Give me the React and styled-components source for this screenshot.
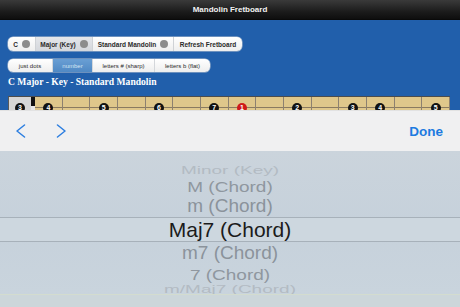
import React from "react";
import styled, { createGlobalStyle } from "styled-components";

const GlobalStyle = createGlobalStyle`
  html, body {
    margin: 0;
    padding: 0;
    background: #215fab;
  }
  body {
    font-family: "Liberation Sans", Arial, sans-serif;
  }
`;

const keyParts = [
  { label: "C", width: 27, knob: true },
  { label: "Major (Key)", width: 57, knob: true, active: true },
  { label: "Standard Mandolin", width: 81, knob: true },
  { label: "Refresh Fretboard", width: 69 },
];

const modes = [
  { label: "just dots", width: 44 },
  { label: "number", width: 40, active: true },
  { label: "letters # (sharp)", width: 62 },
  { label: "letters b (flat)", width: 56 },
];

// fret number -> note on the top string
const notes = { 1: "4", 3: "5", 5: "6", 7: "7", 8: "1", 10: "2", 12: "3", 13: "4", 15: "5" };

const rows = [
  { text: "Minor (Key)", h: 14, scale: 0.55, color: "#b3bbc3" },
  { text: "M (Chord)", h: 18, scale: 0.78, color: "#8f979f" },
  { text: "m (Chord)", h: 22, scale: 0.92, color: "#8b939b" },
];

const rowsBelow = [
  { text: "m7 (Chord)", h: 22, scale: 0.92, color: "#8b939b" },
  { text: "7 (Chord)", h: 20, scale: 0.8, color: "#8f979f" },
  { text: "m/Maj7 (Chord)", h: 11, scale: 0.55, color: "#b3bbc3" },
];

export default function App() {
  const frets = [];
  for (let i = 1; i <= 15; i++) frets.push(i);

  return (
    <Screen>
      <GlobalStyle />
      <TitleBar>Mandolin Fretboard</TitleBar>
      <Content>
        <Segmented $top={17} $height={14}>
          {keyParts.map((p) => (
            <KeySegment key={p.label} $width={p.width} $active={p.active}>
              {p.label}
              {p.knob && <Knob />}
            </KeySegment>
          ))}
        </Segmented>
        <Segmented $top={8} $height={13}>
          {modes.map((m) => (
            <ModeSegment key={m.label} $width={m.width} $active={m.active}>
              {m.label}
            </ModeSegment>
          ))}
        </Segmented>
        <Heading>C Major - Key - Standard Mandolin</Heading>
        <Board>
          <OpenCell>
            <Dot>3</Dot>
          </OpenCell>
          <Nut />
          <Frets>
            {frets.map((f) => (
              <Fret key={f}>
                {notes[f] && <Dot $root={notes[f] === "1"}>{notes[f]}</Dot>}
              </Fret>
            ))}
          </Frets>
        </Board>
      </Content>

      <InputPanel>
        <Toolbar>
          <NavGroup>
            <Chevron viewBox="0 0 11 14">
              <polyline points="9.5,1 2,7 9.5,13" />
            </Chevron>
            <Chevron viewBox="0 0 11 14">
              <polyline points="1.5,1 9,7 1.5,13" />
            </Chevron>
          </NavGroup>
          <DoneButton>Done</DoneButton>
        </Toolbar>
        <Picker>
          {rows.map((r) => (
            <PickerRow key={r.text} $h={r.h}>
              <PickerText $scale={r.scale} $color={r.color}>{r.text}</PickerText>
            </PickerRow>
          ))}
          <SelectedRow>Maj7 (Chord)</SelectedRow>
          {rowsBelow.map((r) => (
            <PickerRow key={r.text} $h={r.h}>
              <PickerText $scale={r.scale} $color={r.color}>{r.text}</PickerText>
            </PickerRow>
          ))}
        </Picker>
        <PickerFoot />
      </InputPanel>
    </Screen>
  );
}

const Screen = styled.div`
  position: relative;
  width: 460px;
  height: 307px;
  overflow: hidden;
  background: #215fab;
`;

const TitleBar = styled.div`
  height: 20px;
  display: flex;
  align-items: center;
  justify-content: center;
  background: linear-gradient(#3a3a3a, #1c1c1c 60%, #0e0e0e);
  border-bottom: 1px solid #0a0a0a;
  color: #f2f2f2;
  font-size: 8px;
  font-weight: bold;
  box-sizing: border-box;
`;

const Content = styled.div`
  padding: 0 0 0 8px;
  display: flex;
  flex-direction: column;
  align-items: flex-start;
`;

const Segmented = styled.div`
  margin-top: ${(p) => p.$top}px;
  height: ${(p) => p.$height}px;
  display: flex;
  border-radius: 5px;
  overflow: hidden;
  background: linear-gradient(#ffffff, #eeeeee);
  box-shadow: 0 0 0 0.5px #b9c4d2;
`;

const KeySegment = styled.div`
  width: ${(p) => p.$width}px;
  display: flex;
  align-items: center;
  justify-content: center;
  gap: 4px;
  box-sizing: border-box;
  border-left: 1px solid #cfd2d6;
  background: ${(p) => (p.$active ? "linear-gradient(#e4e6ea, #d4d7dc)" : "transparent")};
  color: #2a2a2a;
  font-size: 6.5px;
  font-weight: bold;
  white-space: nowrap;
  &:first-child {
    border-left: none;
  }
`;

const Knob = styled.span`
  width: 8px;
  height: 8px;
  border-radius: 50%;
  background: #8c8c8c;
`;

const ModeSegment = styled.div`
  width: ${(p) => p.$width}px;
  display: flex;
  align-items: center;
  justify-content: center;
  box-sizing: border-box;
  border-left: 1px solid #d4d7db;
  background: ${(p) => (p.$active ? "linear-gradient(#6a9fd4, #5089c4)" : "transparent")};
  color: ${(p) => (p.$active ? "#d6e4f2" : "#2a2a2a")};
  font-size: 6px;
  white-space: nowrap;
  &:first-child {
    border-left: none;
  }
`;

const Heading = styled.h1`
  margin: 4px 0 0;
  height: 12px;
  line-height: 12px;
  font-family: "Liberation Serif", "Times New Roman", serif;
  font-size: 9.6px;
  font-weight: bold;
  color: #ffffff;
`;

const Board = styled.div`
  margin-top: 8px;
  width: 442px;
  height: 40px;
  display: flex;
  border-top: 1px solid #4c4c4c;
  border-left: 1px solid #5a5a5a;
  box-sizing: border-box;
`;

const OpenCell = styled.div`
  width: 22px;
  display: flex;
  justify-content: center;
  padding-top: 6px;
  background: #d6d6d6;
  box-sizing: border-box;
`;

const Nut = styled.div`
  width: 4px;
  background: linear-gradient(#111 0, #111 9px, #e8e8e8 9px);
`;

const Frets = styled.div`
  flex: 1;
  display: grid;
  grid-template-columns: repeat(15, 1fr);
  background: #dfc78b;
`;

const Fret = styled.div`
  display: flex;
  justify-content: center;
  padding-top: 6px;
  border-right: 1.5px solid #8d8170;
  background: linear-gradient(transparent 10px, #8a7a60 10px, #8a7a60 11px, transparent 11px);
`;

const Dot = styled.span`
  width: 10px;
  height: 10px;
  border-radius: 50%;
  background: ${(p) => (p.$root ? "#cf1a1a" : "#121212")};
  color: #ffffff;
  font-size: 7px;
  font-weight: bold;
  line-height: 10px;
  text-align: center;
`;

const InputPanel = styled.div`
  position: absolute;
  left: 0;
  right: 0;
  bottom: 0;
  height: 197px;
  display: flex;
  flex-direction: column;
  background: #c9d3dc;
`;

const Toolbar = styled.div`
  height: 41px;
  flex-shrink: 0;
  display: flex;
  align-items: center;
  justify-content: space-between;
  padding: 0 17px 0 15px;
  background: #f0f0f1;
  border-top: 1px solid #e2e2e2;
  box-sizing: border-box;
`;

const NavGroup = styled.div`
  display: flex;
  align-items: center;
  gap: 30px;
`;

const Chevron = styled.svg`
  width: 11px;
  height: 14px;
  fill: none;
  stroke: #2c7ee0;
  stroke-width: 1.5;
  stroke-linecap: round;
  stroke-linejoin: round;
`;

const DoneButton = styled.span`
  color: #1d7be0;
  font-size: 13.5px;
  font-weight: bold;
`;

const Picker = styled.div`
  height: 143px;
  padding-top: 12px;
  box-sizing: border-box;
  display: flex;
  flex-direction: column;
  overflow: hidden;
  background: linear-gradient(#cbd4dc, #c6d1db 50%, #c9d4dd);
`;

const PickerRow = styled.div`
  height: ${(p) => p.$h}px;
  flex-shrink: 0;
  display: flex;
  align-items: center;
  justify-content: center;
  overflow: visible;
`;

const PickerText = styled.span`
  font-size: 19px;
  line-height: 19px;
  color: ${(p) => p.$color};
  transform: scaleY(${(p) => p.$scale});
  white-space: nowrap;
`;

const SelectedRow = styled.div`
  height: 25px;
  flex-shrink: 0;
  display: flex;
  align-items: center;
  justify-content: center;
  box-sizing: border-box;
  border-top: 1px solid #a7b1ba;
  border-bottom: 1px solid #a7b1ba;
  background: #cdd7df;
  color: #1b1b1b;
  font-size: 21px;
`;

const PickerFoot = styled.div`
  flex: 1;
  background: #ccd6da;
  border-top: 1px solid #d3dccf;
`;
